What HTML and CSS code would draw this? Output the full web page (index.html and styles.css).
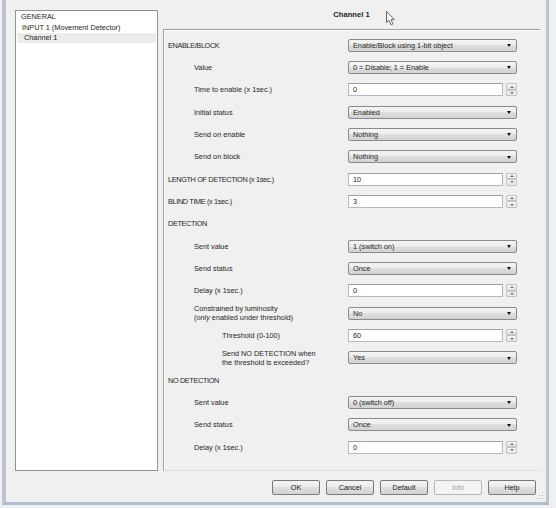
FILE: index.html
```html
<!DOCTYPE html>
<html>
<head>
<meta charset="utf-8">
<link rel="stylesheet" href="styles.css">
</head>
<body>
<div class="window">
  <div class="main">
    <div class="tree">
      <div class="node n0">GENERAL</div>
      <div class="node n1">INPUT 1 (Movement Detector)</div>
      <div class="node n2 sel">Channel 1</div>
    </div>
    <div class="panel">
      <div class="head">Channel 1</div>
      <div class="box">
        <div class="row"><div class="lbl caps">ENABLE/BLOCK</div><div class="combo">Enable/Block using 1-bit object</div></div>
        <div class="row"><div class="lbl i1">Value</div><div class="combo">0 = Disable; 1 = Enable</div></div>
        <div class="row"><div class="lbl i1">Time to enable (x 1sec.)</div><div class="spin"><div class="field">0</div><div class="arrows"><span class="up"></span><span class="down"></span></div></div></div>
        <div class="row"><div class="lbl i1">Initial status</div><div class="combo">Enabled</div></div>
        <div class="row"><div class="lbl i1">Send on enable</div><div class="combo">Nothing</div></div>
        <div class="row"><div class="lbl i1">Send on block</div><div class="combo">Nothing</div></div>
        <div class="row"><div class="lbl caps">LENGTH OF DETECTION (x 1sec.)</div><div class="spin"><div class="field">10</div><div class="arrows"><span class="up"></span><span class="down"></span></div></div></div>
        <div class="row"><div class="lbl caps">BLIND TIME (x 1sec.)</div><div class="spin"><div class="field">3</div><div class="arrows"><span class="up"></span><span class="down"></span></div></div></div>
        <div class="row"><div class="lbl caps">DETECTION</div></div>
        <div class="row"><div class="lbl i1">Sent value</div><div class="combo">1 (switch on)</div></div>
        <div class="row"><div class="lbl i1">Send status</div><div class="combo">Once</div></div>
        <div class="row"><div class="lbl i1">Delay (x 1sec.)</div><div class="spin"><div class="field">0</div><div class="arrows"><span class="up"></span><span class="down"></span></div></div></div>
        <div class="row"><div class="lbl i1 two">Constrained by luminosity<br>(<i>only</i> enabled under threshold)</div><div class="combo">No</div></div>
        <div class="row"><div class="lbl i2">Threshold (0-100)</div><div class="spin"><div class="field">60</div><div class="arrows"><span class="up"></span><span class="down"></span></div></div></div>
        <div class="row"><div class="lbl i2 two">Send NO DETECTION when<br>the threshold is exceeded?</div><div class="combo">Yes</div></div>
        <div class="row"><div class="lbl caps">NO DETECTION</div></div>
        <div class="row"><div class="lbl i1">Sent value</div><div class="combo">0 (switch off)</div></div>
        <div class="row"><div class="lbl i1">Send status</div><div class="combo">Once</div></div>
        <div class="row"><div class="lbl i1">Delay (x 1sec.)</div><div class="spin"><div class="field">0</div><div class="arrows"><span class="up"></span><span class="down"></span></div></div></div>
      </div>
    </div>
  </div>
  <div class="buttons">
    <div class="btn">OK</div>
    <div class="btn">Cancel</div>
    <div class="btn">Default</div>
    <div class="btn disabled">Info</div>
    <div class="btn">Help</div>
  </div>
  <svg class="cursor" width="10" height="15" viewBox="0 0 10 15"><path d="M0.5 0.5 L0.5 11.5 L3 9.2 L5 13.8 L6.9 13 L5 8.6 L8.3 8.6 Z" fill="#fff" stroke="#666" stroke-width="1" stroke-linejoin="round"/></svg>
  <svg class="grip" width="8" height="8" viewBox="0 0 8 8"><g fill="#b5b5b5"><rect x="6" y="0" width="1" height="1"/><rect x="6" y="3" width="1" height="1"/><rect x="3" y="3" width="1" height="1"/><rect x="6" y="6" width="1" height="1"/><rect x="3" y="6" width="1" height="1"/><rect x="0" y="6" width="1" height="1"/></g></svg>
</div>
</body>
</html>
```

FILE: styles.css
```css
html, body {
  margin: 0;
  padding: 0;
  height: 508px;
  overflow: hidden;
  background: #eef0f3;
}
body {
  font-family: "Liberation Sans", Arial, sans-serif;
  font-size: 7.3px;
  color: #262626;
}
.window {
  position: relative;
  margin-left: 2px;
  width: 547px;
  height: 505px;
  box-sizing: border-box;
  border-left: 4px solid #bac3cf;
  border-right: 3px solid #bac3cf;
  border-bottom: 3px solid #b3bdca;
  background: #f0f0f0;
  display: flex;
  flex-direction: column;
}
.main {
  display: flex;
  height: 471px;
}
.tree {
  margin: 10px 0 0 9px;
  width: 143px;
  box-sizing: border-box;
  border: 1px solid #8f949c;
  background: #fff;
  padding-top: 0;
}
.node {
  height: 11px;
  line-height: 11px;
  white-space: nowrap;
  margin: 0 1px;
}
.n0 { padding-left: 4px; }
.n1 { padding-left: 5px; }
.n2 { padding-left: 7px; }
.sel { background: #ececec; height: 10px; line-height: 10px; margin-top: 0; }
.panel {
  margin-left: 5px;
  width: 377px;
  display: flex;
  flex-direction: column;
}
.head {
  height: 29px;
  display: flex;
  align-items: center;
  justify-content: center;
  font-weight: bold;
  font-size: 7.6px;
  color: #1e1e1e;
}
.box {
  flex: 1;
  border-top: 1px solid #a0a0a0;
  border-left: 1px solid #a0a0a0;
  border-bottom: 1px solid #e0e0e0;
  box-shadow: inset 1px 1px 0 #fff;
  padding: 4px 23px 0 4px;
}
.row {
  height: 22.33px;
  display: flex;
  align-items: center;
}
.lbl {
  flex: 1;
  white-space: nowrap;
}
.caps { letter-spacing: -0.35px; }
.i1 { padding-left: 26px; }
.i2 { padding-left: 54px; }
.two { line-height: 9px; }
.combo {
  width: 169px;
  height: 13px;
  box-sizing: border-box;
  border: 1px solid #8a8a8a;
  border-radius: 2px;
  background: linear-gradient(#f5f5f5, #ebebeb 50%, #dedede 50%, #d3d3d3);
  padding-left: 4px;
  display: flex;
  align-items: center;
  position: relative;
  white-space: nowrap;
}
.combo::after {
  content: "";
  position: absolute;
  right: 5px;
  top: 4.5px;
  border-left: 2.5px solid transparent;
  border-right: 2.5px solid transparent;
  border-top: 3px solid #111;
}
.spin {
  width: 169px;
  height: 13px;
  display: flex;
  gap: 3px;
}
.field {
  width: 155px;
  box-sizing: border-box;
  border: 1px solid #b5b8bf;
  border-top-color: #9da1a8;
  background: #fff;
  padding-left: 4px;
  display: flex;
  align-items: center;
}
.arrows {
  width: 11px;
  display: flex;
  flex-direction: column;
}
.arrows span {
  flex: 1;
  box-sizing: border-box;
  border: 1px solid #c3c3c3;
  border-radius: 1px;
  background: linear-gradient(#f6f6f6, #e4e4e4);
  position: relative;
}
.arrows span::after {
  content: "";
  position: absolute;
  left: 2.5px;
  top: 1.2px;
  border-left: 2px solid transparent;
  border-right: 2px solid transparent;
}
.arrows .up::after { border-bottom: 2px solid #777; }
.arrows .down::after { border-top: 2px solid #777; }
.buttons {
  display: flex;
  justify-content: flex-end;
  gap: 6px;
  padding: 9px 10px 0 0;
}
.btn {
  width: 48px;
  height: 15px;
  box-sizing: border-box;
  border: 1px solid #7a7a7a;
  border-radius: 2px;
  background: linear-gradient(#f4f4f4, #ececec 50%, #dfdfdf 50%, #d4d4d4);
  display: flex;
  align-items: center;
  justify-content: center;
  color: #222;
}
.btn.disabled {
  border-color: #b8b8b8;
  background: #f4f4f4;
  color: #a0a0a0;
}
.cursor {
  position: absolute;
  left: 380px;
  top: 11px;
}
.grip {
  position: absolute;
  right: 2px;
  bottom: 2px;
}
```
